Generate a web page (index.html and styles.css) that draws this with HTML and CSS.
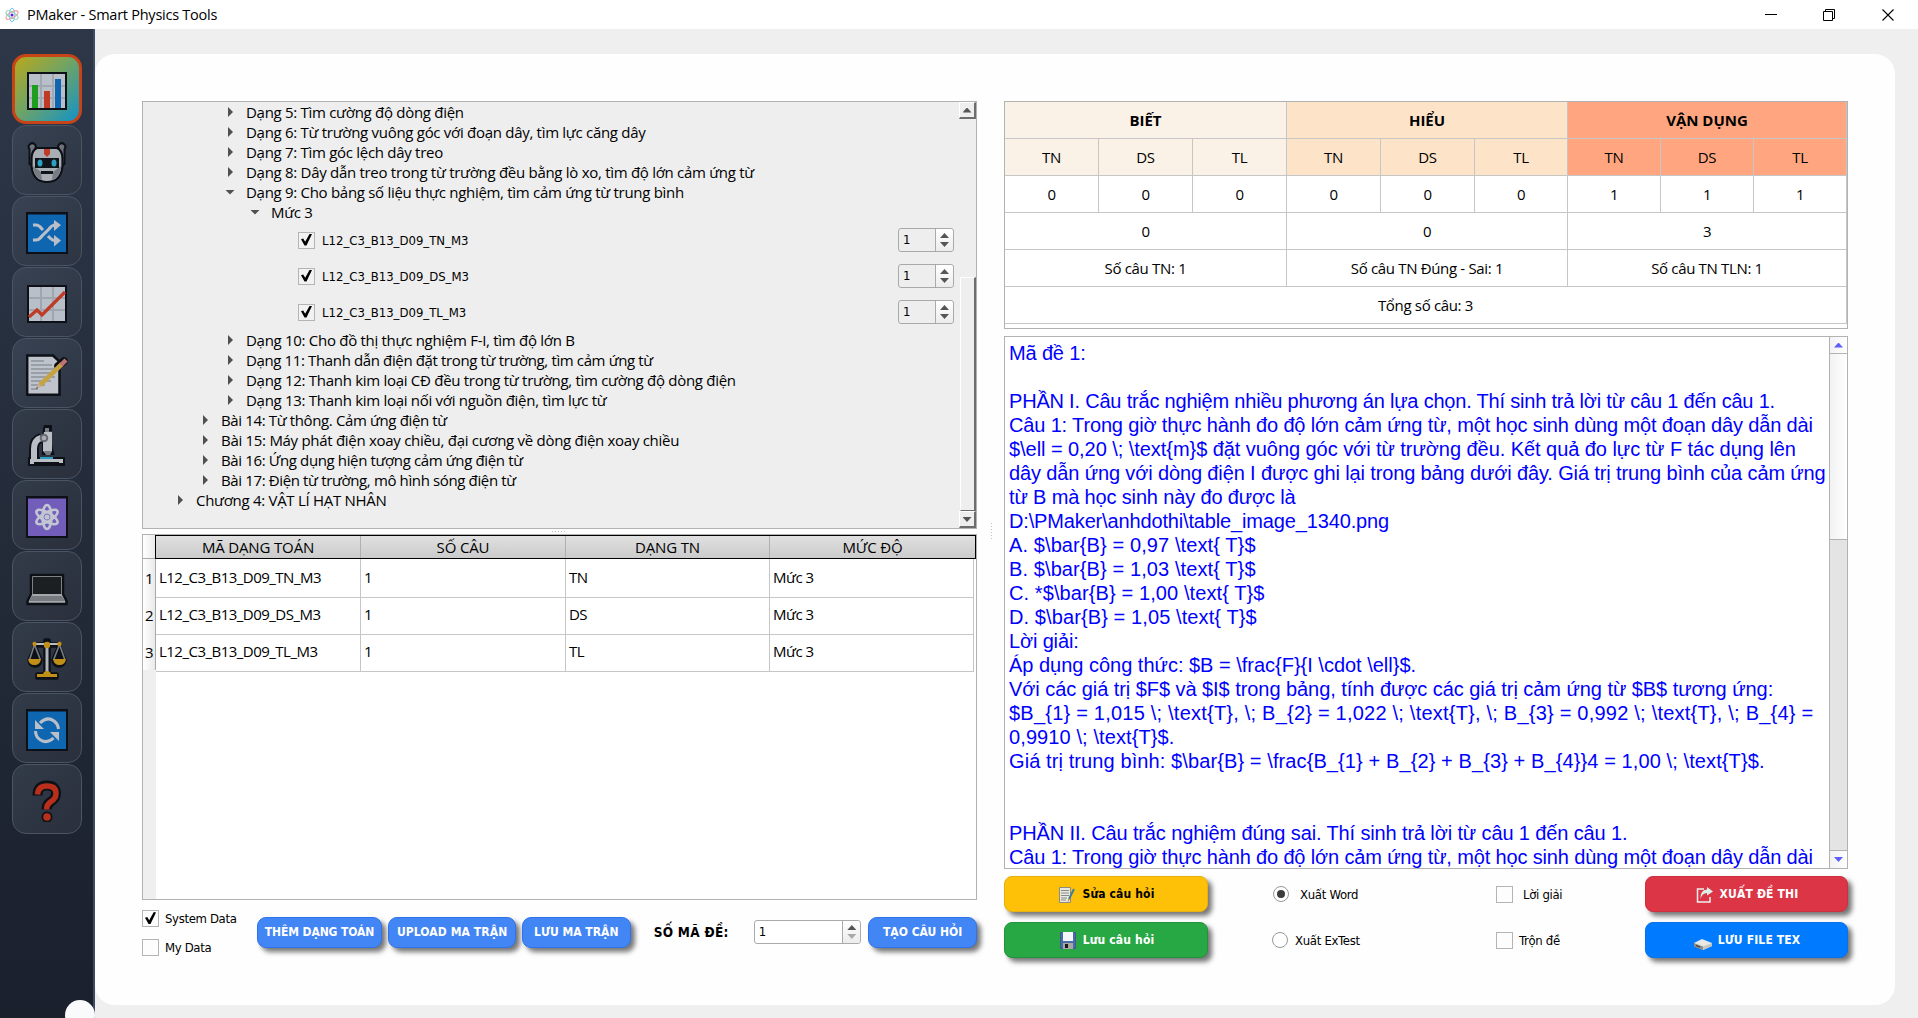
FILE: index.html
```html
<!DOCTYPE html>
<html lang="vi">
<head>
<meta charset="utf-8">
<title>PMaker - Smart Physics Tools</title>
<link rel="stylesheet" href="styles.css">
</head>
<body>
<header class="titlebar">
  <svg class="logo" width="16" height="16" viewBox="0 0 16 16" fill="none" stroke-width=".9"><ellipse cx="8" cy="8" rx="2.8" ry="6.8" stroke="#5cc3ee"/><ellipse cx="8" cy="8" rx="2.8" ry="6.8" stroke="#f2808a" transform="rotate(60 8 8)"/><ellipse cx="8" cy="8" rx="2.8" ry="6.8" stroke="#7fd0b0" transform="rotate(-60 8 8)"/><circle cx="8" cy="8" r="1.500" fill="#5a1fe0"/></svg>
  <span class="app-title">PMaker - Smart Physics Tools</span>
  <svg class="winctl" width="130" height="14" viewBox="0 0 130 14" fill="none" stroke="#000" stroke-width="1"><path d="M0 6.500h12M58.500 3.500h9v9h-9zM60.500 3.500v-2h9v9h-2"/><path d="M117.500 1.500l11 11M128.500 1.500l-11 11" stroke-width="1.100"/></svg>
</header>
<div class="body">
<nav class="sidebar">
  <button class="nav-btn active"><svg viewBox="0 0 42 42"><path fill="#0d1117" d="M1 2h40v38H1z"/><path fill="#b9bfc8" d="M3 4h36v34H3z"/><path stroke="#a2a8b1" stroke-width="2" d="M15 4v34M27 4v34M3 16h36M3 28h36"/><path fill="#1f9d1f" d="M6 15h6v23H6z"/><path fill="#c03b26" d="M18 21h6v17h-6z"/><path fill="#0f66b0" d="M29 9h6v29h-6z"/></svg></button>
  <button class="nav-btn"><svg viewBox="0 0 42 42"><path fill="#70747a" stroke="#0d1117" stroke-width="2" d="M3.500 23V8a3.500 3.500 0 1 1 5.500 0v11h24V8a3.500 3.500 0 1 1 5.500 0v15l-5 2H9z"/><path fill="#a9adb4" stroke="#0d1117" stroke-width="2.200" d="M11 7h20q5 2 5.500 10v8Q35 41 21 41T5.500 25v-8Q6 9 11 7z"/><path fill="#777b82" d="M7 25l8 6 1 8Q7 35 7 25zM35 25l-8 6-1 8q9-4 9-14z"/><path fill="#c03b26" d="M18 8h6v5l-3 3-3-3z"/><path fill="#101318" d="M9 17h24v10H9z"/><ellipse cx="14" cy="22" rx="2.500" ry="3.500" fill="#2c9fc4"/><ellipse cx="28" cy="22" rx="2.500" ry="3.500" fill="#2c9fc4"/><path fill="#101318" d="M15 30h12v3H15z"/></svg></button>
  <button class="nav-btn"><svg viewBox="0 0 42 42"><path fill="#0d1117" d="M0 0h42v42H0z"/><path fill="#0f66b0" d="M2 2.500h38V40H2z"/><g fill="none" stroke="#b9bfc8" stroke-width="3"><path d="M7 13h3q3 0 6 4l1 1M7 28h3q3 0 6-4l7-7q3-4 6-4h1M22 24q4 4.500 7 4.500h1"/></g><path fill="#b9bfc8" d="M28 8l7 5-7 6zM28 23l7 5.500-7 6z"/></svg></button>
  <button class="nav-btn"><svg viewBox="0 0 42 42"><path fill="#0d1117" d="M1 2h40v38H1z"/><path fill="#b9bfc8" d="M3 4h36v34H3z"/><path stroke="#a0a6ae" stroke-width="2" d="M15 4v34M27 4v34M3 15h36M3 27h36"/><path fill="none" stroke="#c03b26" stroke-width="3.200" d="M3 34l8-7 5 5L39 9"/></svg></button>
  <button class="nav-btn"><svg viewBox="0 0 42 42"><path fill="#bfc4cc" stroke="#0d1117" stroke-width="2.500" d="M1.200 1.500H27l6.500 6V40.800H1.200z"/><path stroke="#757b84" stroke-width="1.200" d="M5 7h13M5 11h21M5 15h24M5 19h24M5 23h24M5 27h20M5 31h14M5 35h7"/><path stroke="#0d1117" stroke-width="7.500" stroke-linecap="round" d="M32 12l6-5"/><path stroke="#c6a243" stroke-width="4.500" d="M14 31L36 10"/><path stroke="#bf7375" stroke-width="4.500" d="M35 11l5-5"/><path fill="#c9ad8e" d="M12.500 29.500l3 3-5.500 2.500z"/><path fill="#333" d="M10 35l1-2 1 1z"/></svg></button>
  <button class="nav-btn"><svg viewBox="0 0 42 42"><g stroke="#0d1117" stroke-width="4"><path fill="#0d1117" d="M17 4h7v-2h-4v2l6 24h-8V12l-2-2"/><path d="M4 34h33v5H4z"/></g><path fill="none" stroke="#0d1117" stroke-width="10" d="M8 34V24q0-9 7-11"/><path fill="none" stroke="#b9bdc4" stroke-width="6" d="M8 34V24q0-9 7-11"/><path fill="#b9bdc4" d="M18 7h8v19l-2 3h-4l-3-3V14z"/><path fill="#777b82" d="M19 3h4v4h-4zM18 26h8l-2 4h-4z"/><circle cx="18" cy="13" r="3.300" fill="#a9adb4" stroke="#686c72" stroke-width="2"/><path fill="#2c9fc4" d="M14 32h13v2H14z"/><path fill="#b9bdc4" d="M4 34h33v4h-4v-1H8v2H4z"/></svg></button>
  <button class="nav-btn"><svg viewBox="0 0 42 42"><path fill="#0d1117" d="M0 0h42v42H0z"/><path fill="#725dba" d="M2 2.500h38V40H2z"/><g fill="none" stroke="#c2c5d2" stroke-width="2.600"><ellipse cx="21" cy="21" rx="4.500" ry="12"/><ellipse cx="21" cy="21" rx="4.500" ry="12" transform="rotate(60 21 21)"/><ellipse cx="21" cy="21" rx="4.500" ry="12" transform="rotate(-60 21 21)"/></g><circle cx="21" cy="21" r="2.600" fill="#c2c5d2"/></svg></button>
  <button class="nav-btn"><svg viewBox="0 0 42 42"><path fill="#a5a8ab" stroke="#0d1117" stroke-width="2.500" stroke-linejoin="round" d="M5 8h32v19l3.500 7v3h-39v-3L5 27z"/><path fill="#1c1f22" d="M7 10h28v17H7z"/><path fill="#777b80" d="M6 29h30l3 5H3zM14 32h14l1 2H13z"/></svg></button>
  <button class="nav-btn"><svg viewBox="0 0 42 42"><g fill="#0d1117" stroke="#0d1117" stroke-width="3.500" stroke-linejoin="round"><path d="M8 6h26v2H8zM19 2h4v34h-4zM11 36h20v4H11zM9 8L3 22q1 6 6 6t6-6zM33 8l-6 14q1 6 6 6t6-6z"/></g><path fill="none" stroke="#777b82" stroke-width="1.600" d="M8 8L3.500 22M9 8l5.500 14M33 8l-5.500 14M34 8l5 14"/><path stroke="#b9bdc4" stroke-width="2" d="M8 6h26"/><path stroke="#b0b4bb" stroke-width="3" d="M21 4v32"/><g fill="#c18f18"><path d="M2 21h13q-1 6-6.500 6T2 21zM27 21h13q-1 6-6.500 6T27 21zM11 36h6q1-3 4-3t4 3h6v3H11z"/><circle cx="21" cy="7" r="3.200"/><circle cx="8.500" cy="6" r="2.200"/><circle cx="33.500" cy="6" r="2.200"/></g></svg></button>
  <button class="nav-btn"><svg viewBox="0 0 42 42"><path fill="#0d1117" d="M0 0h42v42H0z"/><path fill="#0f66b0" d="M2 2.500h38V40H2z"/><path fill="none" stroke="#b9bfc8" stroke-width="3" d="M14 14q7-7 14-2 4 3 4.500 8M9.500 22q0 6 5 9 7 4 13-2"/><path fill="#b9bfc8" d="M9 11v9h9zM33 32v-9h-9z"/></svg></button>
  <button class="nav-btn"><svg viewBox="0 0 42 42"><g fill="none" stroke-linejoin="round"><path stroke="#0d1117" stroke-width="10" d="M11.500 15.500q0-10 9.500-10 9 0 9 8 0 5-5 8-4.500 3-4.500 8"/><circle cx="21" cy="37" r="5.500" fill="#0d1117"/><path stroke="#b8301c" stroke-width="5.500" d="M11.500 14.500Q12 6 21 6q9 0 9 7.500 0 5-5 8-4.500 3-4.500 8"/></g><circle cx="21" cy="37" r="3.800" fill="#b8301c"/></svg></button>
  <span class="knob"></span>
</nav>
<main class="panel">
<section class="left">
  <div class="tree">
    <ul class="nodes">
      <li class="d3"><i class="arr"></i>Dạng 5: Tìm cường độ dòng điện</li>
      <li class="d3"><i class="arr"></i>Dạng 6: Từ trường vuông góc với đoạn dây, tìm lực căng dây</li>
      <li class="d3"><i class="arr"></i>Dạng 7: Tìm góc lệch dây treo</li>
      <li class="d3"><i class="arr"></i>Dạng 8: Dây dẫn treo trong từ trường đều bằng lò xo, tìm độ lớn cảm ứng từ</li>
      <li class="d3"><i class="arr open"></i>Dạng 9: Cho bảng số liệu thực nghiệm, tìm cảm ứng từ trung bình</li>
      <li class="d4"><i class="arr open"></i>Mức 3</li>
      <li class="item"><span class="check on"></span><span class="code">L12_C3_B13_D09_TN_M3</span><span class="spin small"><span>1</span><b><i></i><i></i></b></span></li>
      <li class="item"><span class="check on"></span><span class="code">L12_C3_B13_D09_DS_M3</span><span class="spin small"><span>1</span><b><i></i><i></i></b></span></li>
      <li class="item"><span class="check on"></span><span class="code">L12_C3_B13_D09_TL_M3</span><span class="spin small"><span>1</span><b><i></i><i></i></b></span></li>
      <li class="d3"><i class="arr"></i>Dạng 10: Cho đồ thị thực nghiệm F-I, tìm độ lớn B</li>
      <li class="d3 tight"><i class="arr"></i>Dạng 11: Thanh dẫn điện đặt trong từ trường, tìm cảm ứng từ</li>
      <li class="d3"><i class="arr"></i>Dạng 12: Thanh kim loại CĐ đều trong từ trường, tìm cường độ dòng điện</li>
      <li class="d3"><i class="arr"></i>Dạng 13: Thanh kim loại nối với nguồn điện, tìm lực từ</li>
      <li class="d2 tight"><i class="arr"></i>Bài 14: Từ thông. Cảm ứng điện từ</li>
      <li class="d2"><i class="arr"></i>Bài 15: Máy phát điện xoay chiều, đại cương về dòng điện xoay chiều</li>
      <li class="d2 tight"><i class="arr"></i>Bài 16: Ứng dụng hiện tượng cảm ứng điện từ</li>
      <li class="d2 tight"><i class="arr"></i>Bài 17: Điện từ trường, mô hình sóng điện từ</li>
      <li class="d1"><i class="arr"></i>Chương 4: VẬT LÍ HẠT NHÂN</li>
    </ul>
    <div class="treebar"><span class="tb-btn"><i class="up"></i></span><span class="tb-thumb"></span><span class="tb-btn"><i class="down"></i></span></div>
  </div>
  <div class="hgrip"></div>
  <div class="listing">
    <div class="lrow lhead"><span class="num"></span><div class="heads"><span>MÃ DẠNG TOÁN</span><span>SỐ CÂU</span><span>DẠNG TN</span><span>MỨC ĐỘ</span></div></div>
    <div class="lrow"><span class="num">1</span><span>L12_C3_B13_D09_TN_M3</span><span>1</span><span>TN</span><span>Mức 3</span></div>
    <div class="lrow"><span class="num">2</span><span>L12_C3_B13_D09_DS_M3</span><span>1</span><span>DS</span><span>Mức 3</span></div>
    <div class="lrow"><span class="num">3</span><span>L12_C3_B13_D09_TL_M3</span><span>1</span><span>TL</span><span>Mức 3</span></div>
    <div class="gutter"></div>
  </div>
  <div class="controls">
    <div class="sources">
      <label><span class="check on"></span>System Data</label>
      <label><span class="check"></span>My Data</label>
    </div>
    <button class="btn b1">THÊM DẠNG TOÁN</button>
    <button class="btn b2">UPLOAD MA TRẬN</button>
    <button class="btn b3">LƯU MA TRẬN</button>
    <span class="caption">SỐ MÃ ĐỀ:</span>
    <span class="spin large"><span>1</span><b><i></i><i class="off"></i></b></span>
    <button class="btn b4">TẠO CÂU HỎI</button>
  </div>
</section>
<div class="vgrip"></div>
<section class="right">
  <div class="matrix">
    <div class="g3 know h">BIẾT</div><div class="g3 und h">HIỂU</div><div class="g3 app h">VẬN DỤNG</div>
    <div class="know">TN</div><div class="know">DS</div><div class="know">TL</div><div class="und">TN</div><div class="und">DS</div><div class="und">TL</div><div class="app">TN</div><div class="app">DS</div><div class="app">TL</div>
    <div>0</div><div>0</div><div>0</div><div>0</div><div>0</div><div>0</div><div>1</div><div>1</div><div>1</div>
    <div class="g3">0</div><div class="g3">0</div><div class="g3">3</div>
    <div class="g3">Số câu TN: 1</div><div class="g3">Số câu TN Đúng - Sai: 1</div><div class="g3">Số câu TN TLN: 1</div>
    <div class="g9">Tổng số câu: 3</div>
  </div>
  <div class="preview">
    <div class="lines">
      <p>Mã đề 1:</p>
      <p>&nbsp;</p>
      <p class="s0">PHẦN I. Câu trắc nghiệm nhiều phương án lựa chọn. Thí sinh trả lời từ câu 1 đến câu 1.</p>
      <p>Câu 1: Trong giờ thực hành đo độ lớn cảm ứng từ, một học sinh dùng một đoạn dây dẫn dài</p>
      <p class="s2">$\ell = 0,20 \; \text{m}$ đặt vuông góc với từ trường đều. Kết quả đo lực từ F tác dụng lên</p>
      <p class="s1">dây dẫn ứng với dòng điện I được ghi lại trong bảng dưới đây. Giá trị trung bình của cảm ứng</p>
      <p>từ B mà học sinh này đo được là</p>
      <p>D:\PMaker\anhdothi\table_image_1340.png</p>
      <p class="s4">A. $\bar{B} = 0,97 \text{ T}$</p>
      <p class="s4">B. $\bar{B} = 1,03 \text{ T}$</p>
      <p class="s4">C. *$\bar{B} = 1,00 \text{ T}$</p>
      <p class="s4">D. $\bar{B} = 1,05 \text{ T}$</p>
      <p>Lời giải:</p>
      <p class="s3">Áp dụng công thức: $B = \frac{F}{I \cdot \ell}$.</p>
      <p class="s2">Với các giá trị $F$ và $I$ trong bảng, tính được các giá trị cảm ứng từ $B$ tương ứng:</p>
      <p class="s5">$B_{1} = 1,015 \; \text{T}, \; B_{2} = 1,022 \; \text{T}, \; B_{3} = 0,992 \; \text{T}, \; B_{4} =</p>
      <p class="s4">0,9910 \; \text{T}$.</p>
      <p class="s4">Giá trị trung bình: $\bar{B} = \frac{B_{1} + B_{2} + B_{3} + B_{4}}4 = 1,00 \; \text{T}$.</p>
      <p>&nbsp;</p>
      <p>&nbsp;</p>
      <p class="s1">PHẦN II. Câu trắc nghiệm đúng sai. Thí sinh trả lời từ câu 1 đến câu 1.</p>
      <p>Câu 1: Trong giờ thực hành đo độ lớn cảm ứng từ, một học sinh dùng một đoạn dây dẫn dài</p>
    </div>
    <div class="pbar"><span class="pb-btn"><i class="up"></i></span><span class="pb-thumb"></span><span class="pb-track"></span><span class="pb-btn last"><i class="down"></i></span></div>
  </div>
  <div class="actions">
    <button class="act yellow"><svg width="18" height="16" viewBox="0 0 18 16"><path fill="#e9e9e4" stroke="#8b8b80" d="M1.500.500h11v15h-11z"/><path stroke="#8a8a86" d="M3 3.500h8M3 6h8M3 8.500h8M3 11h6M3 13h5"/><path stroke="#3f7f96" stroke-width="2" d="M16 2l-5 10"/><path stroke="#c9772a" d="M11 12l-1 2.500"/></svg>Sửa câu hỏi</button>
    <label class="opt r1"><span class="radio on"></span>Xuất Word</label>
    <label class="opt c1"><span class="check"></span>Lời giải</label>
    <button class="act red"><svg width="18" height="16" viewBox="0 0 18 16" fill="none" stroke="#f0f0f0" stroke-width="1.500"><path d="M8 2H1.500v13h12.500v-5"/><path fill="#dcefe6" stroke="none" d="M11 0l6 4.500-6 4V6Q6 6 4.500 12 4 3 11 2.500z"/></svg>XUẤT ĐỀ THI</button>
    <button class="act green"><svg width="18" height="19" viewBox="0 0 18 19"><path fill="#4a6da8" stroke="#3b5c95" d="M1.500 1.500h15v16h-15z"/><path fill="#f3f6fb" d="M4 1h10v9H4z"/><path fill="#a8a8a0" d="M4 12h10v6H4z"/><path fill="#1a1a1a" d="M6 13h3v4H6z"/></svg>Lưu câu hỏi</button>
    <label class="opt r2"><span class="radio"></span>Xuất ExTest</label>
    <label class="opt c2"><span class="check"></span>Trộn đề</label>
    <button class="act blue"><svg class="low" width="18" height="12" viewBox="0 4 18 12"><path fill="#e8e8e4" d="M0 9l8-4 10 4v3l-9 4-9-4z"/><path fill="#8d8d88" d="M0 9l9 3.500V16l-9-3.500z"/><path fill="#c7c7c0" d="M9 12.500L18 9v3l-9 4z"/><path fill="#333" d="M2 11l4 1.500v1L2 12z"/></svg>LƯU FILE TEX</button>
  </div>
</section>
</main>
</div>
</body>
</html>
```
FILE: styles.css
```css
* { box-sizing: border-box; margin: 0; padding: 0; }
body { width: 1918px; height: 1018px; overflow: hidden; display: flex; flex-direction: column; background: #efefef; color: #000; font: 15px/20px "Open Sans", "Noto Sans", sans-serif; }
button { font: inherit; border: 0; display: flex; align-items: center; justify-content: center; }
svg { display: block; }

.titlebar { height: 29px; flex: none; display: flex; align-items: center; background: #fff; padding: 0 23px 0 4px; }
.app-title { margin-left: 7px; flex: 1; font-size: 14.5px; letter-spacing: -.25px; }
.body { flex: 1; min-height: 0; display: flex; }

.sidebar { position: relative; width: 95px; flex: none; display: flex; flex-direction: column; gap: 1px; padding: 25px 0 0 12px; border-right: 2px solid #3d4a5f; background: linear-gradient(#2d3748, #1a202c); }
.nav-btn { width: 70px; height: 70px; padding-top: 4px; border-radius: 14px; border: 1.5px solid #4b5462; background: linear-gradient(135deg, #384252, #2d3543); }
.nav-btn:nth-child(n+6) { background: linear-gradient(135deg, #323b49, #2a303c); }
.nav-btn svg { width: 42px; height: 42px; }
.nav-btn.active { border: 3px solid #c74318; background: linear-gradient(135deg, #b8a81c, #74a461 45%, #1293c8); }
.knob { position: absolute; left: 65px; top: 971px; width: 30px; height: 30px; border-radius: 50%; background: #f9fafb; }

.panel { width: 1800px; height: 951px; margin-top: 25px; border-radius: 20px; background: #fefefe; display: flex; padding: 47px 0 0 47px; }
.left { width: 835px; }
.tree { height: 428px; border: 1px solid #b2b2b2; background: #eee; display: flex; }
.nodes { flex: 1; list-style: none; white-space: nowrap; letter-spacing: -.29px; }
.nodes li { height: 20px; display: flex; align-items: center; }
.nodes .tight { letter-spacing: -.37px; }
.d1 { padding-left: 35px; } .d2 { padding-left: 60px; } .d3 { padding-left: 85px; } .d4 { padding-left: 110px; }
.arr { width: 18px; flex: none; }
.arr::before { content: ""; display: block; width: 5px; height: 10px; background: #505050; clip-path: polygon(0 0, 100% 50%, 0 100%); }
.arr.open::before { width: 10px; height: 5px; margin-left: -3px; clip-path: polygon(0 0, 100% 0, 50% 100%); }
.nodes .item { height: 36px; padding: 0 5px 0 155px; }
.code { margin-left: 7px; flex: 1; font: 13px "DejaVu Sans Condensed", sans-serif; letter-spacing: 0; }
.check { width: 17px; height: 17px; flex: none; border: 1px solid #b4b4b4; background: #fdfdfd; display: block; }
.item .check { background: #f2f2f2; }
.check.on::before { content: ""; display: block; width: 11px; height: 12px; margin: 1px 2px; background: #000; clip-path: polygon(0 48%, 20% 42%, 38% 68%, 80% 0, 100% 4%, 50% 100%, 32% 100%); }
.spin { display: flex; border: 1px solid #aaa; border-radius: 3px; height: 24px; font: 13px/22px "DejaVu Sans Condensed", sans-serif; }
.spin > span { flex: 1; padding-left: 4px; }
.spin b { border-left: 1px solid #aaa; background: linear-gradient(#fff, #ececec); display: flex; flex-direction: column; align-items: center; justify-content: center; gap: 4px; border-radius: 0 3px 3px 0; }
.spin i { width: 9px; height: 5px; background: #555; clip-path: polygon(50% 0, 100% 100%, 0 100%); }
.spin i + i { transform: scaleY(-1); }
.spin i.off { background: #aaa; }
.small { width: 56px; } .small b { width: 18px; }
.large { width: 108px; background: #fff; } .large b { width: 18px; }
.treebar { width: 17px; display: flex; flex-direction: column; }
.tb-btn { height: 17px; border: 1px solid #fff; border-right: 2px solid #6d6d6d; border-bottom: 2px solid #6d6d6d; display: flex; align-items: center; justify-content: center; }
.tb-thumb { flex: 1; margin: 158px 0 0 1px; border: 1px solid #fff; border-right: 2px solid #6d6d6d; border-bottom: 1px solid #6d6d6d; }
.up, .down { width: 9px; height: 5px; background: #555; clip-path: polygon(50% 0, 100% 100%, 0 100%); }
.down { transform: scaleY(-1); }
.hgrip { height: 5px; margin-left: 410px; width: 14px; background: repeating-linear-gradient(90deg, #bbb 0 1px, transparent 1px 3px) 0 2px / 14px 1px no-repeat; }

.listing { height: 366px; border: 1px solid #b2b2b2; background: #fff; display: flex; flex-direction: column; letter-spacing: -.52px; }
.lrow { display: grid; grid-template-columns: 13px 205px 205px 204px 204px; height: 37px; flex: none; }
.lrow > span { border-right: 1px solid #c6c6c6; border-bottom: 1px solid #c6c6c6; padding-left: 3px; line-height: 37px; }
.lrow > .num { background: linear-gradient(90deg, #fff, #eaeaea); border-color: #aaa; padding-left: 2px; line-height: 38px; }
.lhead { height: 24px; grid-template-columns: 13px 1fr; }
.heads { display: grid; grid-template-columns: 204px 205px 204px 1fr; border: 1px solid #000; background: linear-gradient(#e0e0e0, #cbcbcb); text-align: center; letter-spacing: -.15px; line-height: 22px; margin-left: -1px; }
.heads span + span { border-left: 1px solid #b0b0b0; }
.gutter { flex: 1; width: 13px; background: #efefef; }

.controls { display: flex; align-items: center; height: 64px; font: 13px/17px "DejaVu Sans Condensed", sans-serif; }
.sources { width: 115px; align-self: flex-start; padding-top: 10px; display: flex; flex-direction: column; gap: 12px; letter-spacing: -.34px; }
.sources label { display: flex; gap: 6px; }
.btn { height: 31px; border-radius: 9px; background: #4285f4; border: 1px solid #2f73ea; color: #fff; font-weight: bold; font-size: 12px; white-space: nowrap; box-shadow: 4px 4px 5px #777; padding-top: 1px; }
.b1 { width: 126px; letter-spacing: -.1px; } .b2 { width: 128px; margin-left: 6px; letter-spacing: .1px; } .b3 { width: 109px; margin-left: 6px; } .b4 { width: 109px; margin-left: 7px; }
.caption { margin-left: 23px; width: 75px; font-weight: bold; font-size: 13.5px; letter-spacing: .3px; white-space: nowrap; }
.controls .large { margin-left: 25px; }

.vgrip { width: 27px; height: 17px; margin-top: 422px; background: repeating-linear-gradient(#c4c4c4 0 1px, transparent 1px 3px) 14px 0 / 1px 17px no-repeat; }
.right { width: 844px; }
.matrix { height: 228px; border: 1px solid #b2b2b2; background: #fff; display: grid; grid-template-columns: 94px 94px 94px 94px 94px 93px 93px 93px 93px; grid-auto-rows: 37px; align-content: start; text-align: center; line-height: 36px; letter-spacing: -.33px; }
.matrix div { border-right: 1px solid #c6c6c6; border-bottom: 1px solid #c6c6c6; }
.matrix .g3 { grid-column: span 3; } .matrix .g9 { grid-column: span 9; }
.matrix .h { font-weight: bold; letter-spacing: 0; }
.know { background: #faf1e7; } .und { background: #fde3c8; } .app { background: #ffa680; }

.preview { height: 533px; margin-top: 7px; border: 1px solid #b2b2b2; background: #fff; display: flex; overflow: hidden; }
.lines { flex: 1; padding: 4px 0 0 4px; overflow: hidden; color: #00f; font: 20px/24px "Liberation Sans", Arial, sans-serif; letter-spacing: -.15px; white-space: nowrap; }
.lines p { height: 24px; }
.s0 { letter-spacing: -.2px; } .s1 { letter-spacing: -.13px; } .s2 { letter-spacing: -.055px; } .s3 { letter-spacing: -.01px; } .s4 { letter-spacing: .1px; } .s5 { letter-spacing: .22px; }
.pbar { width: 18px; flex: none; border-left: 1px solid #b2b2b2; display: flex; flex-direction: column; background: linear-gradient(90deg, #f2f2f2, #fff); }
.pb-btn { height: 17px; border-bottom: 1px solid #b2b2b2; display: flex; align-items: center; justify-content: center; }
.pb-btn.last { border: 0; }
.pb-btn i { background: #5e5eff; }
.pb-thumb { height: 185px; }
.pb-track { flex: 1; background: #e4e4e4; border: solid #b2b2b2; border-width: 1px 0; }

.actions { display: grid; grid-template-columns: 204px 210px 227px 203px; grid-template-rows: 36px 36px; row-gap: 10px; margin-top: 7px; font: 13px/17px "DejaVu Sans Condensed", sans-serif; }
.act { border-radius: 8px; gap: 6px; padding: 1px 0 0 1px; font-weight: bold; font-size: 12px; letter-spacing: .15px; color: #fff; box-shadow: 4px 4px 5px #777; }
.low { margin-top: 6px; }
.yellow { background: #ffc107; color: #000; border: 1px solid #e6b010; } .green { background: #28a745; border: 1px solid #23923d; } .red { background: #dc3545; border: 1px solid #cf3040; } .blue { background: #007bff; border: 1px solid #0a72e6; }
.opt { display: flex; align-items: center; letter-spacing: -.3px; white-space: nowrap; }
.r1 { padding-left: 65px; gap: 11px; } .r2 { padding-left: 64px; gap: 7px; }
.c1 { padding-left: 78px; gap: 10px; } .c2 { padding-left: 78px; gap: 6px; }
.radio { width: 16px; height: 16px; border-radius: 50%; border: 1px solid #999; background: #fff; padding: 3px; }
.radio.on::before { content: ""; display: block; width: 8px; height: 8px; border-radius: 50%; background: #3c3c3c; }
```
